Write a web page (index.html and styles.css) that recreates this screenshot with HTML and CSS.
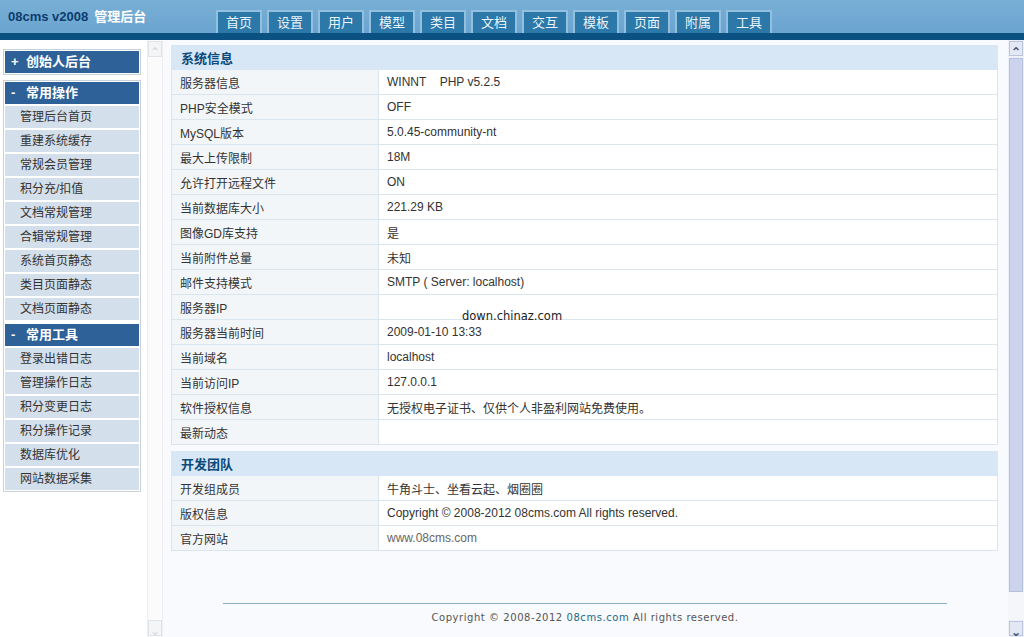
FILE: index.html
```html
<!DOCTYPE html>
<html lang="zh-CN">
<head>
    <meta charset="UTF-8">
    <title>08cms v2008 管理后台</title>
    <link rel="stylesheet" href="styles.css">
</head>
<body>

    <!-- Top header with tabs -->
    <div class="header">
        <div class="brand"><span class="brand-name">08cms v2008</span><span class="brand-sub">管理后台</span></div>
        <ul class="tabs">
            <li>首页</li>
            <li>设置</li>
            <li>用户</li>
            <li>模型</li>
            <li>类目</li>
            <li>文档</li>
            <li>交互</li>
            <li>模板</li>
            <li>页面</li>
            <li>附属</li>
            <li>工具</li>
        </ul>
    </div>
    <div class="header-bar"></div>

    <div class="frames">
        <!-- Left menu frame -->
        <div class="side">
            <div class="menu-box">
                <div class="menu-head"><span class="sign">+</span>创始人后台</div>
            </div>
            <div class="menu-box">
                <div class="menu-head"><span class="sign">-</span>常用操作</div>
                <div class="menu-item">管理后台首页</div>
                <div class="menu-item">重建系统缓存</div>
                <div class="menu-item">常规会员管理</div>
                <div class="menu-item">积分充/扣值</div>
                <div class="menu-item">文档常规管理</div>
                <div class="menu-item">合辑常规管理</div>
                <div class="menu-item">系统首页静态</div>
                <div class="menu-item">类目页面静态</div>
                <div class="menu-item">文档页面静态</div>
                <div class="menu-head second"><span class="sign">-</span>常用工具</div>
                <div class="menu-item">登录出错日志</div>
                <div class="menu-item">管理操作日志</div>
                <div class="menu-item">积分变更日志</div>
                <div class="menu-item">积分操作记录</div>
                <div class="menu-item">数据库优化</div>
                <div class="menu-item">网站数据采集</div>
            </div>
        </div>
        <div class="scroll scroll-off">
            <div class="arrow">&#8963;</div>
            <div class="track"></div>
            <div class="arrow">&#8964;</div>
        </div>

        <!-- Main content frame -->
        <div class="main">
            <table class="info">
                <tr><th colspan="2">系统信息</th></tr>
                <tr><td class="lbl">服务器信息</td><td>WINNT&nbsp;&nbsp;&nbsp;&nbsp;PHP v5.2.5</td></tr>
                <tr><td class="lbl">PHP安全模式</td><td>OFF</td></tr>
                <tr><td class="lbl">MySQL版本</td><td>5.0.45-community-nt</td></tr>
                <tr><td class="lbl">最大上传限制</td><td>18M</td></tr>
                <tr><td class="lbl">允许打开远程文件</td><td>ON</td></tr>
                <tr><td class="lbl">当前数据库大小</td><td>221.29 KB</td></tr>
                <tr><td class="lbl">图像GD库支持</td><td>是</td></tr>
                <tr><td class="lbl">当前附件总量</td><td>未知</td></tr>
                <tr><td class="lbl">邮件支持模式</td><td>SMTP ( Server: localhost)</td></tr>
                <tr><td class="lbl">服务器IP</td><td class="ip-cell"><span class="watermark">down.chinaz.com</span></td></tr>
                <tr><td class="lbl">服务器当前时间</td><td>2009-01-10 13:33</td></tr>
                <tr><td class="lbl">当前域名</td><td>localhost</td></tr>
                <tr><td class="lbl">当前访问IP</td><td>127.0.0.1</td></tr>
                <tr><td class="lbl">软件授权信息</td><td>无授权电子证书、仅供个人非盈利网站免费使用。</td></tr>
                <tr><td class="lbl">最新动态</td><td></td></tr>
            </table>

            <table class="info">
                <tr><th colspan="2">开发团队</th></tr>
                <tr><td class="lbl">开发组成员</td><td>牛角斗士、坐看云起、烟圈圈</td></tr>
                <tr><td class="lbl">版权信息</td><td>Copyright &copy; 2008-2012 08cms.com All rights reserved.</td></tr>
                <tr><td class="lbl">官方网站</td><td class="muted">www.08cms.com</td></tr>
            </table>

            <div class="footer">
                Copyright &copy; 2008-2012 <span class="site">08cms.com</span> All rights reserved.
            </div>
        </div>
        <div class="scroll scroll-on">
            <div class="arrow">&#8963;</div>
            <div class="thumb"></div>
            <div class="track"></div>
            <div class="arrow">&#8964;</div>
        </div>
    </div>

</body>
</html>
```

FILE: styles.css
```css
/* Page base */
html, body {
    height: 100%;
    margin: 0;
}

body {
    display: flex;
    flex-direction: column;
    font-family: "Liberation Sans", "Noto Sans CJK SC", sans-serif;
    font-size: 12px;
    color: #333;
    background-color: #fff;
    overflow: hidden;
}

/* Top header */
.header {
    height: 33px;
    display: flex;
    align-items: flex-end;
    background: linear-gradient(#79afd6, #6aa4cf);
}

.brand {
    align-self: center;
    width: 208px;
    padding-left: 8px;
    font-size: 13px;
    font-weight: bold;
    margin-top: -2px;
}

.brand-name {
    color: #0c3c6c;
    margin-right: 6px;
}

.brand-sub {
    color: #fff;
}

.tabs {
    display: flex;
    gap: 5px;
    list-style: none;
    margin: 0;
    padding: 0;
}

.tabs li {
    width: 42px;
    height: 21px;
    line-height: 21px;
    text-align: center;
    color: #eaf4fb;
    font-size: 13px;
    background-color: #2b78a9;
    border: 2px solid #93c0df;
    border-bottom: none;
}

.header-bar {
    height: 7px;
    background-color: #0b5282;
}

/* Frames */
.frames {
    flex: 1;
    display: flex;
    min-height: 0;
}

.side {
    width: 147px;
    padding-top: 9px;
    background-color: #fff;
}

.menu-box {
    margin: 0 6px 5px 3px;
    padding: 1px;
    border: 1px solid #c9d1d8;
}

.menu-head {
    height: 22px;
    line-height: 22px;
    padding-left: 6px;
    background-color: #2d6197;
    color: #fff;
    font-weight: bold;
    font-size: 13px;
}

.menu-head.second {
    margin-top: 4px;
}

.menu-head .sign {
    display: inline-block;
    width: 15px;
}

.menu-item {
    height: 22px;
    line-height: 22px;
    margin-top: 2px;
    padding-left: 15px;
    background-color: #d3dfea;
    color: #333;
}

/* Fake frame scrollbars */
.scroll {
    width: 16px;
    display: flex;
    flex-direction: column;
}

.scroll .arrow {
    height: 15px;
    margin: 1px;
    line-height: 20px;
    text-align: center;
    font-size: 12px;
    border: 1px solid #dfe3ea;
    box-sizing: border-box;
}

.scroll .track {
    flex: 1;
}

.scroll-off {
    background-color: #fbfbfb;
    border-left: 1px solid #eceef2;
    border-right: 1px solid #eceef2;
    width: 14px;
}

.scroll-off .arrow {
    color: #d4d8de;
    background-color: #f4f5f7;
    height: 16px;
    margin: 1px 0;
}

.scroll-on {
    background-color: #eef0f8;
}

.scroll-on .arrow {
    color: #4d5877;
    background-color: #e4e8f4;
    border-color: #bcc4dc;
    font-weight: bold;
}

.scroll-on .thumb {
    height: 532px;
    margin: 1px 1px 0;
    background-color: #ccd3ec;
    border: 1px solid #b7c0de;
}

.scroll-on .track {
    background-color: #f5f6fa;
}

/* Main content */
.main {
    flex: 1;
    padding: 5px 10px 0 8px;
    background-color: #f9fafd;
}

.info {
    width: 100%;
    border-collapse: collapse;
    margin-bottom: 6px;
}

.info th {
    height: 23px;
    padding: 0 0 0 9px;
    text-align: left;
    font-size: 13px;
    color: #0b4a79;
    background-color: #d7e7f5;
    border: 1px solid #d7e7f5;
}

.info td {
    height: 24px;
    padding: 0 0 0 8px;
    background-color: #fff;
    border: 1px solid #dae5ee;
    color: #333;
}

.info td.lbl {
    width: 198px;
    padding-left: 8px;
    background-color: #f3f6f9;
}

.info td.muted {
    color: #666;
}

.ip-cell {
    position: relative;
}

/* Watermark text laid over the row */
.watermark {
    position: absolute;
    left: 83px;
    top: 14px;
    color: #222;
    font-family: "DejaVu Sans", sans-serif;
    font-size: 11.5px;
}

.footer {
    margin: 52px 51px 0 52px;
    padding-top: 8px;
    border-top: 1px solid #8eaec3;
    text-align: center;
    font-family: "DejaVu Sans", sans-serif;
    font-size: 10px;
    letter-spacing: 0.55px;
    color: #555;
}

.footer .site {
    color: #1d6a86;
}
```
